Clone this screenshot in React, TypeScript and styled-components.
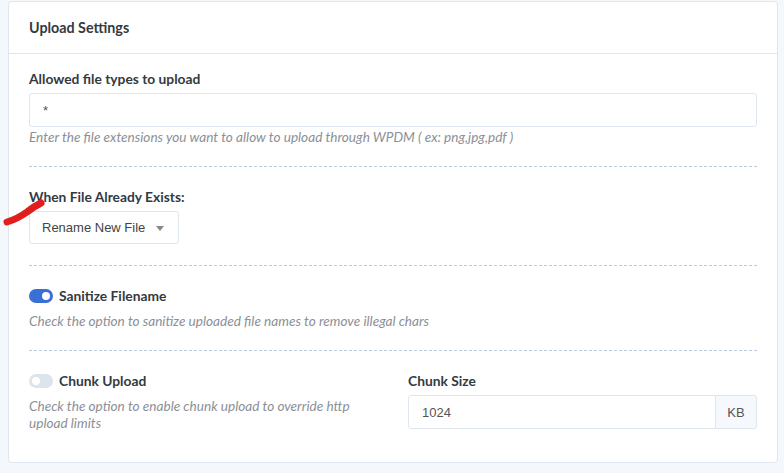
import React from "react";
import styled, { createGlobalStyle } from "styled-components";

const Global = createGlobalStyle`
  html, body { margin: 0; padding: 0; background: #f4f7fb; }
  body { font-family: Lato, "Noto Sans", sans-serif; }
  * { box-sizing: border-box; }
`;

const Page = styled.div`
  position: relative;
  padding: 1px 6px 0 8px;
  width: 784px;
  height: 473px;
`;

const Card = styled.div`
  background: #fff;
  border: 1px solid #dfe6ee;
  border-radius: 4px;
  width: 770px;
  height: 462px;
`;

const CardHeader = styled.div`
  height: 52px;
  border-bottom: 1px solid #dfe6ee;
  display: flex;
  align-items: center;
  padding: 0 20px;
  font-weight: 700;
  font-size: 14.3px;
  color: #333a42;
`;

const CardBody = styled.div`
  padding: 17px 20px 0 20px;
`;

const Section = styled.div<{ $pb?: number }>`
  padding-bottom: ${(p) => p.$pb ?? 22}px;
  border-bottom: 1px dashed #b6cbe2;
  margin-bottom: 22px;
  &:last-child { border-bottom: none; margin-bottom: 0; }
`;

const Label = styled.div`
  font-weight: 700;
  font-size: 13.8px;
  color: #333a42;
  line-height: 16px;
  margin-bottom: 6px;
`;

const TextInput = styled.div`
  height: 34px;
  border: 1px solid #dfe6ee;
  border-radius: 3px;
  display: flex;
  align-items: center;
  padding: 0 13px;
  font-family: "Liberation Sans", Arial, sans-serif;
  font-size: 13px;
  color: #555;
  flex: 1;
`;

const Help = styled.div`
  font-style: italic;
  font-size: 13.6px;
  color: #8b9097;
  line-height: 17px;
  margin-top: 2px;
`;

const Select = styled.div`
  width: 150px;
  height: 33px;
  border: 1px solid #dfe6ee;
  border-radius: 3px;
  display: flex;
  align-items: center;
  justify-content: space-between;
  padding: 0 14px 0 12px;
  font-family: "Liberation Sans", Arial, sans-serif;
  font-size: 13px;
  color: #444;
`;

const Caret = styled.span`
  width: 0;
  height: 0;
  border-left: 4px solid transparent;
  border-right: 4px solid transparent;
  border-top: 5px solid #888;
  margin-top: 1px;
`;

const ToggleRow = styled.div`
  display: flex;
  align-items: center;
  gap: 6px;
  font-weight: 700;
  font-size: 13.8px;
  color: #333a42;
  line-height: 16px;
  margin-bottom: 9px;
`;

const Toggle = styled.span<{ $on?: boolean }>`
  position: relative;
  width: 24px;
  height: 14px;
  border-radius: 7px;
  background: ${(p) => (p.$on ? "#3a6fd6" : "#dde4ec")};
  flex-shrink: 0;
  &::after {
    content: "";
    position: absolute;
    top: 3px;
    left: ${(p) => (p.$on ? "13px" : "3px")};
    width: 8px;
    height: 8px;
    border-radius: 50%;
    background: #fff;
  }
`;

const Columns = styled.div`
  display: grid;
  grid-template-columns: 1fr 1fr;
  column-gap: 30px;
`;

const InputGroup = styled.div`
  display: flex;
  height: 34px;
`;

const GroupInput = styled(TextInput)`
  border-radius: 3px 0 0 3px;
  height: 34px;
`;

const Addon = styled.div`
  width: 41px;
  border: 1px solid #dfe6ee;
  border-left: none;
  border-radius: 0 3px 3px 0;
  background: #f5f8fc;
  display: flex;
  align-items: center;
  justify-content: center;
  font-family: "Liberation Sans", Arial, sans-serif;
  font-size: 13px;
  color: #555;
`;

const Scribble = styled.svg`
  position: absolute;
  left: 0;
  top: 194px;
`;

export default function App() {
  return (
    <>
      <Global />
      <Page>
        <Card>
          <CardHeader>Upload Settings</CardHeader>
          <CardBody>
            <Section $pb={20}>
              <Label>Allowed file types to upload</Label>
              <TextInput>*</TextInput>
              <Help>Enter the file extensions you want to allow to upload through WPDM ( ex: png,jpg,pdf )</Help>
            </Section>
            <Section $pb={21}>
              <Label>When File Already Exists:</Label>
              <Select>
                <span>Rename New File</span>
                <Caret />
              </Select>
            </Section>
            <Section $pb={20}>
              <ToggleRow>
                <Toggle $on />
                Sanitize Filename
              </ToggleRow>
              <Help>Check the option to sanitize uploaded file names to remove illegal chars</Help>
            </Section>
            <Section>
              <Columns>
                <div>
                  <ToggleRow>
                    <Toggle />
                    Chunk Upload
                  </ToggleRow>
                  <Help>Check the option to enable chunk upload to override http upload limits</Help>
                </div>
                <div>
                  <Label>Chunk Size</Label>
                  <InputGroup>
                    <GroupInput>1024</GroupInput>
                    <Addon>KB</Addon>
                  </InputGroup>
                </div>
              </Columns>
            </Section>
          </CardBody>
        </Card>
        <Scribble width="50" height="36" viewBox="0 0 50 36">
          <path d="M7 28 C 14 26, 20 23, 27 18 C 33 13, 37 11, 41 9" stroke="#e21d1d" strokeWidth="7" strokeLinecap="round" fill="none" />
        </Scribble>
      </Page>
    </>
  );
}
